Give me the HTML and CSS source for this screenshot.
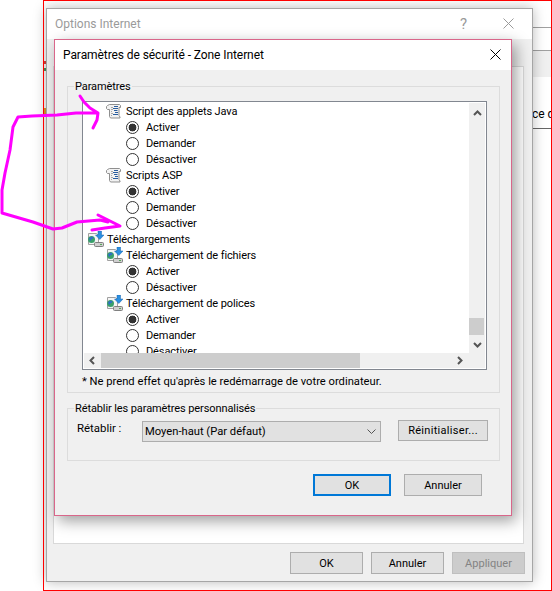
FILE: index.html
```html
<!DOCTYPE html>
<html lang="fr">
<head>
    <meta charset="UTF-8">
    <meta name="viewport" content="width=device-width, initial-scale=1.0">
    <title>Paramètres de sécurité - Zone Internet</title>
    <link rel="stylesheet" href="styles.css">
</head>
<body>
    <svg class="defs" width="0" height="0">
        <symbol id="ico-script" viewBox="0 0 17 16">
            <path d="M3.500 1.500h10l1 1v2h-1.500v8l1 1.500v1H4.500l-1-1.500v-7H1.500l-1-1v-2l1-1z" fill="#f2f2f2" stroke="#8f8f8f"/>
            <path d="M5 4.500h2M5 6.500h2M5 8.500h1M5 10.500h2M5 12.500h1" stroke="#a8a8a8"/>
            <path d="M8 3.500h4M7 5.500h5M8 7.500h3.500M9 9.500h3M7 11.500h5" stroke="#2a5d9e" stroke-width="1.100"/>
        </symbol>
        <symbol id="ico-down" viewBox="0 0 17 16">
            <path d="M1.500 2.500h8l2 2v9h-10z" fill="#f4f4f4" stroke="#a0a0a0"/>
            <circle cx="4.500" cy="8.500" r="3.500" fill="#3aa06a"/>
            <path d="M2 7.500c1-1.500 3-2 4-1.500s0 2-1 2-1 2-2 2z" fill="#2f6fc4"/>
            <rect x="7.500" y="11.500" width="9" height="4" rx="1" fill="#cfcfcf" stroke="#808080"/>
            <path d="M13 13.500h2" stroke="#5aa85a"/>
            <path d="M11 0h3.500v4H17l-4.200 4.500L8.500 4H11z" fill="#2b8fe0" stroke="#1a66b0" stroke-width=".5"/>
        </symbol>
    </svg>

    <!-- fenetre derriere -->
    <div class="behind">
        <span class="behind-line behind-a"></span>
        <span class="behind-band"></span>
        <span class="behind-line behind-b"></span>
        <span class="behind-text">ce d</span>
        <span class="behind-line behind-c"></span>
        <span class="tick tick-red"></span>
        <span class="tick tick-green"></span>
        <span class="tick tick-orange"></span>
    </div>

    <div class="window options">
        <div class="titlebar titlebar-options">
            <span class="title-muted">Options Internet</span>
            <span class="help-mark">?</span>
            <svg class="close-icon" width="11" height="11" viewBox="0 0 11 11"><path d="M.5.500l10 10M10.500.500l-10 10" stroke="#9a9a9a" fill="none"/></svg>
        </div>
        <div class="options-body">
            <div class="tab-panel"></div>
            <div class="button-row">
                <button class="btn btn-wide" type="button">OK</button>
                <button class="btn btn-wide" type="button">Annuler</button>
                <button class="btn btn-wide btn-disabled" type="button">Appliquer</button>
            </div>
        </div>
    </div>

    <div class="window security">
        <div class="titlebar titlebar-security">
            <span class="title-text">Paramètres de sécurité - Zone Internet</span>
            <svg class="close-icon" width="11" height="11" viewBox="0 0 11 11"><path d="M.5.500l10 10M10.500.500l-10 10" stroke="#000" fill="none"/></svg>
        </div>
        <div class="security-body">
            <fieldset class="group group-settings">
                <legend>Paramètres</legend>
                <div class="listbox">
                    <div class="list-rows">
                        <div class="row indent-1"><svg class="tree-icon"><use href="#ico-script"/></svg><span class="row-text">Script des applets Java</span></div>
                        <div class="row indent-2"><span class="radio checked"></span><span class="row-text">Activer</span></div>
                        <div class="row indent-2"><span class="radio"></span><span class="row-text">Demander</span></div>
                        <div class="row indent-2"><span class="radio"></span><span class="row-text">Désactiver</span></div>
                        <div class="row indent-1"><svg class="tree-icon"><use href="#ico-script"/></svg><span class="row-text">Scripts ASP</span></div>
                        <div class="row indent-2"><span class="radio checked"></span><span class="row-text">Activer</span></div>
                        <div class="row indent-2"><span class="radio"></span><span class="row-text">Demander</span></div>
                        <div class="row indent-2"><span class="radio"></span><span class="row-text">Désactiver</span></div>
                        <div class="row indent-0"><svg class="tree-icon"><use href="#ico-down"/></svg><span class="row-text">Téléchargements</span></div>
                        <div class="row indent-1"><svg class="tree-icon"><use href="#ico-down"/></svg><span class="row-text">Téléchargement de fichiers</span></div>
                        <div class="row indent-2"><span class="radio checked"></span><span class="row-text">Activer</span></div>
                        <div class="row indent-2"><span class="radio"></span><span class="row-text">Désactiver</span></div>
                        <div class="row indent-1"><svg class="tree-icon"><use href="#ico-down"/></svg><span class="row-text">Téléchargement de polices</span></div>
                        <div class="row indent-2"><span class="radio checked"></span><span class="row-text">Activer</span></div>
                        <div class="row indent-2"><span class="radio"></span><span class="row-text">Demander</span></div>
                        <div class="row indent-2"><span class="radio"></span><span class="row-text">Désactiver</span></div>
                    </div>
                    <div class="vscroll">
                        <svg class="arrow" width="9" height="6" viewBox="0 0 9 6"><path d="M1 5l3.500-3.500L8 5" fill="none" stroke="#555" stroke-width="2"/></svg>
                        <div class="vtrack"><div class="vthumb"></div></div>
                        <svg class="arrow" width="9" height="6" viewBox="0 0 9 6"><path d="M1 1l3.500 3.500L8 1" fill="none" stroke="#555" stroke-width="2"/></svg>
                    </div>
                    <div class="hscroll">
                        <svg class="arrow" width="6" height="9" viewBox="0 0 6 9"><path d="M5 1L1.500 4.500 5 8" fill="none" stroke="#555" stroke-width="2"/></svg>
                        <div class="htrack"><div class="hthumb"></div></div>
                        <svg class="arrow" width="6" height="9" viewBox="0 0 6 9"><path d="M1 1l3.500 3.500L1 8" fill="none" stroke="#555" stroke-width="2"/></svg>
                    </div>
                    <div class="corner"></div>
                </div>
                <p class="note">* Ne prend effet qu'après le redémarrage de votre ordinateur.</p>
            </fieldset>

            <fieldset class="group group-reset">
                <legend>Rétablir les paramètres personnalisés</legend>
                <div class="reset-row">
                    <span class="reset-label">Rétablir :</span>
                    <div class="combo">
                        <span>Moyen-haut (Par défaut)</span>
                        <svg width="9" height="5" viewBox="0 0 9 5"><path d="M.5.500l4 4 4-4" fill="none" stroke="#555"/></svg>
                    </div>
                    <button class="btn btn-reset" type="button">Réinitialiser...</button>
                </div>
            </fieldset>

            <div class="button-row button-row-security">
                <button class="btn btn-dialog btn-default" type="button">OK</button>
                <button class="btn btn-dialog" type="button">Annuler</button>
            </div>
        </div>
    </div>

    <!-- cadre rouge de la capture -->
    <div class="frame"></div>

    <!-- annotation a la main -->
    <svg class="scribble" width="552" height="591" viewBox="0 0 552 591">
        <path d="M80 96 84 102 90 108 98 113 97 120 93 128M98 113 76 113 57 115 32 116 18 117 13 127 10 150 5 173 2 190 2 213 33 222 53 229 62 228 77 222 100 220 108 222M98 215 110 221 120 226 105 228 92 230" fill="none" stroke="#ff00ff" stroke-width="3" stroke-linecap="round" stroke-linejoin="round"/>
    </svg>
</body>
</html>
```

FILE: styles.css
```css
* {
    box-sizing: border-box;
}

html, body {
    margin: 0;
    padding: 0;
    width: 552px;
    height: 591px;
    overflow: hidden;
    background: #fff;
    font-family: Roboto, "Noto Sans", "Liberation Sans", sans-serif;
    font-size: 12px;
    color: #000;
}

.defs {
    position: absolute;
}

.frame {
    position: absolute;
    left: 43px;
    top: 0;
    width: 509px;
    height: 591px;
    border: 1px solid #f00;
    pointer-events: none;
}

.behind-line {
    position: absolute;
    left: 532px;
    width: 19px;
    height: 1px;
    background: #a0a0a0;
}

.behind-a {
    top: 27px;
}

.behind-b {
    top: 50px;
}

.behind-c {
    top: 128px;
    background: #666;
}

.behind-band {
    position: absolute;
    left: 532px;
    top: 51px;
    width: 19px;
    height: 26px;
    background: #f0f0f0;
}

.behind-text {
    position: absolute;
    left: 532px;
    top: 106px;
    width: 19px;
    overflow: hidden;
    white-space: nowrap;
    line-height: 16px;
}

.tick {
    position: absolute;
    left: 44px;
    width: 2px;
}

.tick-red {
    top: 61px;
    height: 3px;
    background: #d9443c;
}

.tick-green {
    top: 68px;
    height: 3px;
    background: #4b9a5c;
}

.tick-orange {
    top: 108px;
    height: 9px;
    background: #e0a030;
}

.window {
    position: absolute;
    display: flex;
    flex-direction: column;
}

.options {
    left: 46px;
    top: 8px;
    width: 487px;
    height: 574px;
    background: #f0f0f0;
    border: 1px solid #a6a6a6;
    box-shadow: 0 0 12px rgba(0, 0, 0, .28);
}

.titlebar {
    display: flex;
    align-items: center;
    height: 30px;
    background: #fff;
    flex-shrink: 0;
}

.titlebar-options {
    padding: 0 18px 1px 8px;
}

.titlebar-options .close-icon {
    margin-bottom: 1px;
}

.title-muted {
    flex: 1;
    color: #9a9a9a;
}

.help-mark {
    font-size: 15px;
    color: #9a9a9a;
    margin-right: 36px;
}

.options-body {
    flex: 1;
    display: flex;
    flex-direction: column;
    padding: 27px 7px 7px 6px;
}

.tab-panel {
    flex: 1;
    margin-right: 1px;
    background: #fff;
    border: 1px solid #d9d9d9;
}

.button-row {
    display: flex;
    justify-content: flex-end;
    gap: 8px;
    margin-top: 8px;
}

.btn {
    height: 22px;
    padding: 0;
    background: #e1e1e1;
    border: 1px solid #adadad;
    font: inherit;
    font-size: 11px;
    color: #000;
}

.btn-wide {
    width: 73px;
}

.btn-disabled {
    background: #cccccc;
    border-color: #bfbfbf;
    color: #838383;
}

.security {
    left: 54px;
    top: 39px;
    width: 458px;
    height: 477px;
    background: #f0f0f0;
    border: 1px solid #d9668a;
    box-shadow: 4px 5px 14px rgba(0, 0, 0, .38);
}

.titlebar-security {
    padding: 0 10px 0 8px;
}

.titlebar-security .close-icon {
    margin-bottom: 2px;
}

.title-text {
    flex: 1;
    letter-spacing: -.08px;
}

.security-body {
    flex: 1;
    padding: 7px 11px 0 12px;
}

.group {
    margin: 0;
    padding: 0;
    border: 1px solid #dcdcdc;
    min-width: 0;
}

.group legend {
    margin-left: 6px;
    padding: 2px 1px 0;
    line-height: 16px;
    font-size: 11px;
    letter-spacing: -.1px;
}

.group-settings {
    height: 316px;
    padding-top: 6px;
}

.listbox {
    display: grid;
    grid-template-columns: 1fr 16px;
    grid-template-rows: 1fr 15px;
    width: 405px;
    height: 269px;
    margin-left: 14px;
    padding: 1px;
    background: #fff;
    border: 1px solid #828790;
}

.list-rows {
    overflow: hidden;
    font-size: 11px;
    letter-spacing: -.1px;
}

.row {
    display: flex;
    align-items: center;
    height: 16px;
    line-height: 16px;
    white-space: nowrap;
}

.row-text {
    padding-top: 2px;
}

.indent-0 {
    padding-left: 3px;
}

.indent-1 {
    padding-left: 22px;
}

.indent-2 {
    padding-left: 42px;
}

.tree-icon {
    width: 17px;
    height: 16px;
    margin-right: 3px;
    flex-shrink: 0;
}

.radio {
    width: 13px;
    height: 13px;
    margin-right: 7px;
    border: 1px solid #333;
    border-radius: 50%;
    background: #fff;
    flex-shrink: 0;
}

.radio.checked {
    background: radial-gradient(circle, #333 0 3.6px, #fff 4.2px);
}

.vscroll {
    display: flex;
    flex-direction: column;
    align-items: center;
    padding: 7px 0 5px;
    background: #f0f0f0;
}

.vtrack {
    position: relative;
    flex: 1;
    width: 100%;
}

.vthumb {
    position: absolute;
    left: 0;
    right: 1px;
    bottom: 7px;
    height: 17px;
    background: #cdcdcd;
}

.hscroll {
    display: flex;
    align-items: center;
    padding: 0 6px 0 5px;
    background: #f0f0f0;
}

.htrack {
    flex: 1;
    margin-left: 6px;
}

.hthumb {
    width: 259px;
    height: 15px;
    background: #cdcdcd;
}

.corner {
    background: #f0f0f0;
}

.note {
    margin: 4px 0 0 14px;
    font-size: 11.2px;
    line-height: 16px;
}

.group-reset {
    height: 62px;
    margin-top: 6px;
    padding-top: 3px;
}

.reset-row {
    display: flex;
    align-items: flex-start;
    margin-left: 9px;
}

.reset-label {
    width: 65px;
    font-size: 11.4px;
    line-height: 16px;
}

.combo {
    display: flex;
    align-items: center;
    justify-content: space-between;
    width: 239px;
    height: 21px;
    margin-top: 1px;
    padding: 0 4px 0 2px;
    font-size: 11.2px;
    background: #e1e1e1;
    border: 1px solid #adadad;
}

.btn-reset {
    width: 90px;
    height: 21px;
    margin-left: 17px;
    letter-spacing: .3px;
}

.button-row-security {
    margin-top: 13px;
    padding-right: 18px;
    gap: 13px;
}

.btn-dialog {
    width: 78px;
}

.btn-default {
    border: 2px solid #0078d7;
}

.scribble {
    position: absolute;
    left: 0;
    top: 0;
    pointer-events: none;
}
```
